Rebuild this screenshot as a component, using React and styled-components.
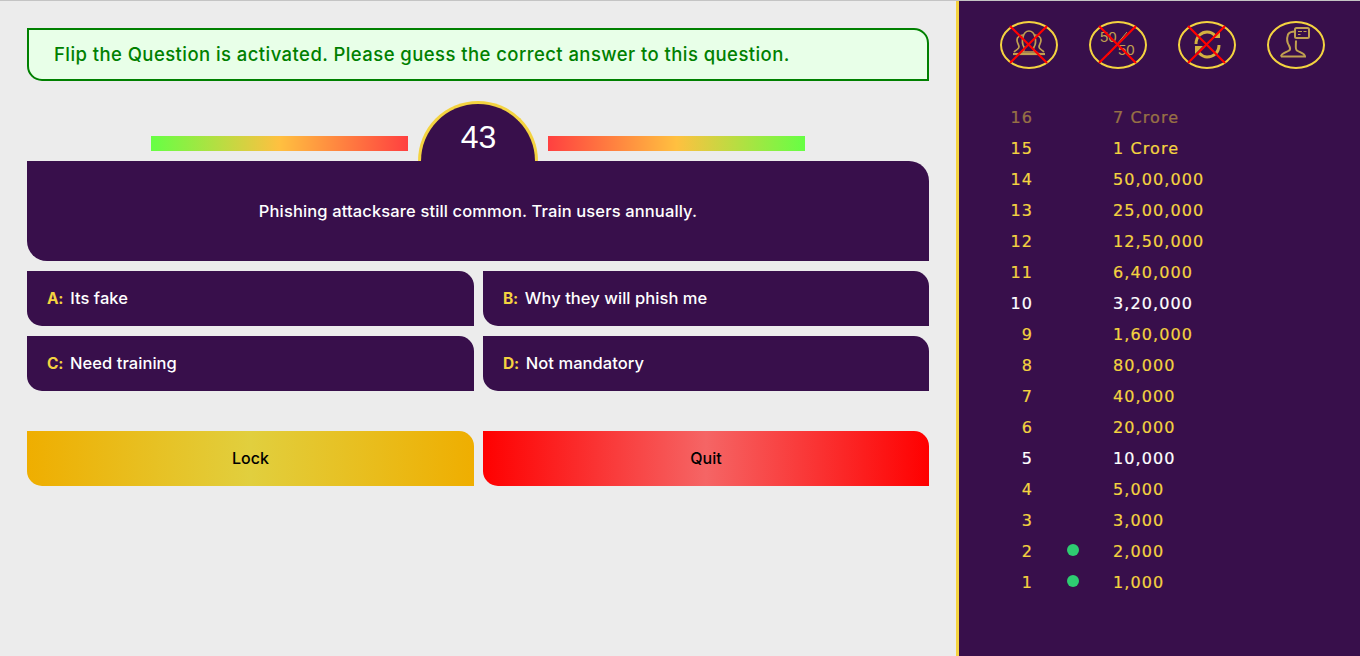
import React from 'react';
import styled, { createGlobalStyle } from 'styled-components';

const purple = '#380f4b';
const gold = '#f4d340';
const iconGold = '#c0a050';

const ladder = [
  ['16', '7 Crore', 'spent'],
  ['15', '1 Crore', 'milestone'],
  ['14', '50,00,000'],
  ['13', '25,00,000'],
  ['12', '12,50,000'],
  ['11', '6,40,000'],
  ['10', '3,20,000', 'safe'],
  ['9', '1,60,000'],
  ['8', '80,000'],
  ['7', '40,000'],
  ['6', '20,000'],
  ['5', '10,000', 'safe'],
  ['4', '5,000'],
  ['3', '3,000'],
  ['2', '2,000', 'won'],
  ['1', '1,000', 'won'],
];

const GlobalStyle = createGlobalStyle`
  html, body { margin: 0; padding: 0; height: 100%; }
  body { background: #ececec; font-family: "Inter", "Open Sans", sans-serif; }
  * { box-sizing: border-box; }
`;

const Page = styled.div`
  display: flex;
  height: 656px;
  border-top: 1px solid #c4c4c4;
  overflow: hidden;
`;

const Main = styled.div`
  width: 956px;
  padding: 27px 27px 0 27px;
`;

const Notice = styled.div`
  height: 53px;
  display: flex;
  align-items: center;
  padding: 0 0 1px 25px;
  background: #e8ffe8;
  color: green;
  border: 2px solid green;
  border-radius: 0 15px 0 15px;
  font-size: 18.5px;
  font-weight: 500;
  letter-spacing: 0.43px;
`;

const TimerRow = styled.div`
  display: flex;
  justify-content: center;
  align-items: flex-end;
  gap: 10px;
  margin-top: 20px;
`;

const Bar = styled.div`
  width: 257px;
  height: 15px;
  margin-bottom: 10px;
  background: linear-gradient(${p => p.$dir}, #ff4040, #ffc040, #66ff44);
`;

const Timer = styled.div`
  width: 120px;
  height: 60px;
  display: flex;
  justify-content: center;
  padding: 15px 0 0 1px;
  background: ${purple};
  color: #fff;
  border: 3px solid ${gold};
  border-bottom: none;
  border-radius: 60px 60px 0 0;
  font-family: "Liberation Sans", Arial, sans-serif;
  font-size: 32px;
  line-height: 37px;
`;

const Question = styled.div`
  height: 100px;
  display: flex;
  align-items: center;
  justify-content: center;
  background: ${purple};
  color: #fff;
  border-radius: 0 20px 0 20px;
  font-size: 16.5px;
  font-weight: 500;
  letter-spacing: 0.13px;
`;

const Grid = styled.div`
  display: grid;
  grid-template-columns: 447px 446px;
  column-gap: 9px;
  row-gap: 10px;
  margin-top: ${p => p.$top}px;
`;

const Option = styled.div`
  height: 55px;
  display: flex;
  align-items: baseline;
  gap: 7px;
  padding: 17px 0 0 20px;
  background: ${purple};
  color: #fff;
  border-radius: 0 15px 0 15px;
  font-size: 16.5px;
  font-weight: 500;
  letter-spacing: 0.05px;
`;

const Letter = styled.span`
  color: ${gold};
  font-size: 15.5px;
  font-weight: 700;
  letter-spacing: -0.3px;
`;

const ActionButton = styled.button`
  height: 55px;
  padding: 0 0 2px;
  border: none;
  border-radius: 0 15px 0 15px;
  background: ${p => p.$quit
    ? 'linear-gradient(90deg, #ff0000, #f56565, #ff0000)'
    : 'linear-gradient(90deg, #efae00, #e1cf3e, #efae00)'};
  color: #000;
  font-family: inherit;
  font-size: 16px;
  font-weight: 500;
`;

const Side = styled.div`
  width: 404px;
  border-left: 3px solid ${gold};
  background: ${purple};
`;

const Lifelines = styled.div`
  display: flex;
  gap: 31px;
  padding: 20px 0 0 41px;
`;

const Lifeline = styled.div`
  position: relative;
  width: 58px;
  height: 48px;
  border: 2px solid ${gold};
  border-radius: 50%;
`;

const IconArt = styled.svg`
  position: absolute;
  left: -2px;
  top: -2px;
  width: 58px;
  height: 48px;
  fill: none;
  stroke: ${iconGold};
  stroke-width: 1.7;
`;

const Cross = styled.svg`
  position: absolute;
  left: -2px;
  top: -2px;
  width: 58px;
  height: 48px;
  stroke: #ff0000;
  stroke-width: 2.2;
`;

const LadderList = styled.div`
  margin-top: 33px;
  font-family: "DejaVu Sans", Verdana, sans-serif;
  font-size: 16px;
  letter-spacing: 1.1px;
  -webkit-text-stroke: 0.2px currentColor;
`;

const Rung = styled.div`
  height: 31px;
  display: grid;
  grid-template-columns: 74px 80px 1fr;
  align-items: center;
  color: ${p => (p.$kind === 'safe' ? '#fff' : gold)};
  opacity: ${p => (p.$kind === 'spent' ? 0.5 : 1)};
`;

const Level = styled.span`
  text-align: right;
`;

const DotCell = styled.span`
  display: flex;
  justify-content: center;
`;

const Dot = styled.span`
  width: 12px;
  height: 12px;
  border-radius: 50%;
  background: #2ecc71;
  margin-bottom: 4px;
`;

const CrossLines = () => (
  <Cross viewBox="0 0 58 48">
    <line x1="10" y1="5" x2="47" y2="42" />
    <line x1="47" y1="5" x2="10" y2="42" />
  </Cross>
);

const AudienceIcon = () => (
  <IconArt viewBox="0 0 58 48">
    <path d="M24 26c-2-3-2-6-1-10 1-4 3-6 6-6s5 2 6 6c1 4 1 7-1 10-1 2-1 3 2 5H22c3-2 3-3 2-5z" />
    <path d="M23 14c-3 0-6 2-6 5 0 3 2 5 2 7 0 2-3 3-5 5M35 14c3 0 6 2 6 5 0 3-2 5-2 7 0 2 3 3 5 5" />
    <path d="M13 33h32" strokeWidth="2.2" />
  </IconArt>
);

const FiftyIcon = () => (
  <IconArt viewBox="0 0 58 48">
    <text x="11" y="21" fontFamily="Liberation Sans, Arial, sans-serif" fontSize="15" fill={iconGold} stroke="none">50</text>
    <text x="29" y="34" fontFamily="Liberation Sans, Arial, sans-serif" fontSize="15" fill={iconGold} stroke="none">50</text>
    <line x1="38" y1="11" x2="19" y2="34" strokeWidth="1" />
  </IconArt>
);

const FlipIcon = () => (
  <IconArt viewBox="0 0 58 48" style={{ stroke: '#d4b23f' }}>
    <path d="M18 23c0-8 6-12 11-12 3 0 6 1 8 4" strokeWidth="3" />
    <path d="M41 24c0 8-6 12-12 12-3 0-5-1-8-4" strokeWidth="3" />
    <path d="M42 10v7h-8zM17 33v-8h8z" fill="#d4b23f" stroke="none" />
  </IconArt>
);

const ExpertIcon = () => (
  <IconArt viewBox="0 0 58 48">
    <path d="M14 35.500c0-3 5-4 8-6 2-1 1-3 0-5-2-3-2-8-1-11 1-2 4-3 7-3" strokeWidth="2" />
    <path d="M14 35.500h24c0-3-5-4-8-6-2-1-1-5-1-10" strokeWidth="2" />
    <rect x="28" y="7" width="14" height="10" rx="1.500" strokeWidth="2" />
    <path d="M31 10.500h4M36.500 10.500h3M31 13.500h2.500" strokeWidth="1" />
  </IconArt>
);

export default function App() {
  return (
    <Page>
      <GlobalStyle />
      <Main>
        <Notice>Flip the Question is activated. Please guess the correct answer to this question.</Notice>
        <TimerRow>
          <Bar $dir="270deg" />
          <Timer>43</Timer>
          <Bar $dir="90deg" />
        </TimerRow>
        <Question>Phishing attacksare still common. Train users annually.</Question>
        <Grid $top={10}>
          <Option><Letter>A:</Letter> Its fake</Option>
          <Option><Letter>B:</Letter> Why they will phish me</Option>
          <Option><Letter>C:</Letter> Need training</Option>
          <Option><Letter>D:</Letter> Not mandatory</Option>
        </Grid>
        <Grid $top={40}>
          <ActionButton>Lock</ActionButton>
          <ActionButton $quit>Quit</ActionButton>
        </Grid>
      </Main>
      <Side>
        <Lifelines>
          <Lifeline><AudienceIcon /><CrossLines /></Lifeline>
          <Lifeline><FiftyIcon /><CrossLines /></Lifeline>
          <Lifeline><FlipIcon /><CrossLines /></Lifeline>
          <Lifeline><ExpertIcon /></Lifeline>
        </Lifelines>
        <LadderList>
          {ladder.map(([level, amount, kind]) => (
            <Rung key={level} $kind={kind}>
              <Level>{level}</Level>
              <DotCell>{kind === 'won' && <Dot />}</DotCell>
              <span>{amount}</span>
            </Rung>
          ))}
        </LadderList>
      </Side>
    </Page>
  );
}
